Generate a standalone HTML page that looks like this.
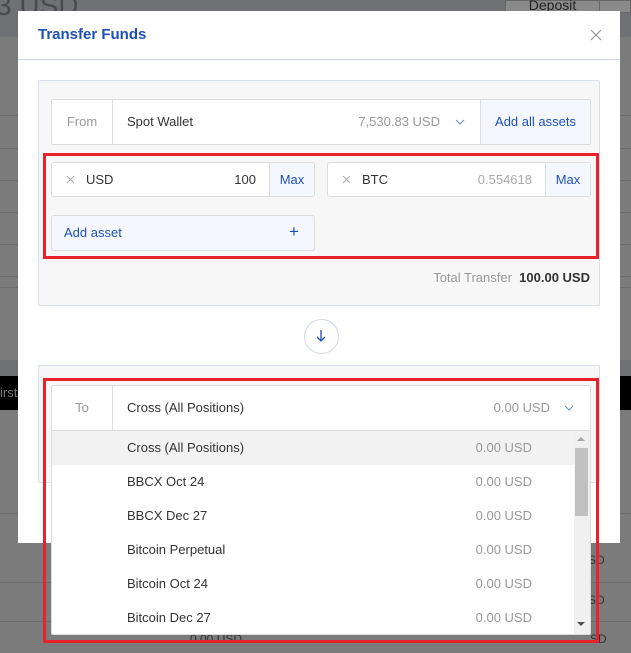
<!DOCTYPE html>
<html><head><meta charset="utf-8"><style>
*{box-sizing:border-box;margin:0;padding:0}
body{width:631px;height:653px;overflow:hidden;position:relative;background:#7b7b7b;font-family:"Liberation Sans",sans-serif;font-size:13px;color:#333}
.abs{position:absolute}
.bgl{position:absolute;left:0;width:631px;height:1px;background:#6c6c6c}
.modal{position:absolute;left:18px;top:11px;width:602px;height:532px;background:#fff}
.hdr{position:absolute;left:0;top:0;width:602px;height:49px;border-bottom:1px solid #d3dbe6}
.panel{position:absolute;background:#f7f7f7;border:1px solid #d6dfeb;border-radius:2px}
.box{position:absolute;background:#fff;border:1px solid #dcdcdc;border-radius:3px}
.red{position:absolute;border:3px solid #e8212a}
.blue{color:#1e4fb5}
.row{position:absolute;left:0;width:522px;height:34px;line-height:34px}
.row .n{position:absolute;left:75px}
.row .v{position:absolute;right:42px;color:#999}
</style></head><body>
<div class="abs" style="left:0;top:0;width:631px;height:37px;background:#6f7174"></div>
<div class="abs" style="left:-4px;top:-10px;font-size:28px;color:#4a4a4a">3 USD</div>
<div class="abs" style="left:505px;top:0;width:95px;height:13px;background:#8a8a8a;border:1px solid #666;color:#222;font-size:14px;text-align:center;line-height:8px">Deposit</div>
<div class="abs" style="left:599px;top:0;width:32px;height:13px;background:#8a8a8a;border:1px solid #666"></div>
<div class="bgl" style="top:115px"></div><div class="bgl" style="top:148px"></div><div class="bgl" style="top:180px"></div><div class="bgl" style="top:212px"></div><div class="bgl" style="top:244px"></div><div class="bgl" style="top:276px"></div><div class="bgl" style="top:287px"></div>
<div class="abs" style="left:0;top:360px;width:631px;height:16px;background:#6f7174"></div>
<div class="abs" style="left:0;top:376px;width:631px;height:34px;background:#000;color:#777;line-height:34px;font-size:13px;padding-left:0">irst</div>
<div class="bgl" style="top:513px"></div><div class="bgl" style="top:582px"></div><div class="bgl" style="top:621px"></div>
<div class="abs" style="left:588px;top:553px;color:#333;font-size:12px">SD</div>
<div class="abs" style="left:588px;top:593px;color:#333;font-size:12px">SD</div>
<div class="abs" style="left:190px;top:632px;color:#333;font-size:12px">0.00 USD</div>
<div class="abs" style="left:590px;top:632px;color:#333;font-size:12px">SD</div>

<div class="modal">
 <div class="hdr">
  <div class="abs blue" style="left:20px;top:15px;font-size:15px;font-weight:bold">Transfer Funds</div>
  <svg class="abs" style="left:572px;top:18px" width="12" height="12"><path d="M1 1L11 11M11 1L1 11" stroke="#999" stroke-width="1.2"/></svg>
 </div>
 <div class="panel" style="left:20px;top:69px;width:562px;height:226px"></div>
 <div class="panel" style="left:20px;top:354px;width:562px;height:118px"></div>
</div>

<div class="box" style="left:51px;top:99px;width:540px;height:46px;border-radius:2px">
 <div class="abs" style="left:0;top:0;width:61px;height:44px;border-right:1px solid #dcdcdc;line-height:44px;text-align:center;color:#999">From</div>
 <div class="abs" style="left:75px;top:0;line-height:44px">Spot Wallet</div>
 <div class="abs" style="right:150px;top:0;line-height:44px;color:#999">7,530.83 USD</div>
 <svg class="abs" style="left:403px;top:19px" width="10" height="6"><path d="M1 1L5 5L9 1" stroke="#6a86c8" fill="none"/></svg>
 <div class="abs blue" style="left:428px;top:0;width:110px;height:44px;border-left:1px solid #dcdcdc;background:#f4f8fe;line-height:44px;text-align:center">Add all assets</div>
</div>

<div class="box" style="left:51px;top:162px;width:264px;height:35px">
 <svg class="abs" style="left:14px;top:12px" width="9" height="9"><path d="M1 1L8 8M8 1L1 8" stroke="#aaa"/></svg>
 <div class="abs" style="left:34px;top:0;line-height:33px">USD</div>
 <div class="abs" style="right:58px;top:0;line-height:33px">100</div>
 <div class="abs blue" style="left:217px;top:0;width:45px;height:33px;border-left:1px solid #dcdcdc;background:#f4f8fe;line-height:33px;text-align:center">Max</div>
</div>
<div class="box" style="left:327px;top:162px;width:264px;height:35px">
 <svg class="abs" style="left:14px;top:12px" width="9" height="9"><path d="M1 1L8 8M8 1L1 8" stroke="#aaa"/></svg>
 <div class="abs" style="left:34px;top:0;line-height:33px">BTC</div>
 <div class="abs" style="right:58px;top:0;line-height:33px;color:#aaa">0.554618</div>
 <div class="abs blue" style="left:217px;top:0;width:45px;height:33px;border-left:1px solid #dcdcdc;background:#f4f8fe;line-height:33px;text-align:center">Max</div>
</div>
<div class="box blue" style="left:51px;top:215px;width:264px;height:36px;background:#f4f8fe;line-height:34px;padding-left:12px">Add asset<span class="abs" style="left:237px;top:-1px;font-size:17px;font-weight:300">+</span></div>
<div class="red" style="left:43px;top:153px;width:556px;height:106px"></div>
<div class="abs" style="right:41px;top:270px;color:#999;white-space:nowrap">Total Transfer&nbsp;&nbsp;<b style="color:#333">100.00 USD</b></div>
<div class="abs" style="left:304px;top:319px;width:35px;height:35px;border:1px solid #cfd8e6;border-radius:50%;background:#fff"></div>
<svg class="abs" style="left:316px;top:329px" width="10" height="14"><path d="M5 1V12M1 8L5 12L9 8" stroke="#1e4fb5" stroke-width="1.3" fill="none"/></svg>

<div class="box" style="left:51px;top:385px;width:540px;height:250px;border-radius:2px;overflow:hidden">
 <div class="abs" style="left:0;top:0;width:538px;height:45px;border-bottom:1px solid #dcdcdc">
  <div class="abs" style="left:0;top:0;width:61px;height:44px;border-right:1px solid #dcdcdc;line-height:44px;text-align:center;color:#999">To</div>
  <div class="abs" style="left:75px;top:0;line-height:44px">Cross (All Positions)</div>
  <div class="abs" style="right:40px;top:0;line-height:44px;color:#999">0.00 USD</div>
  <svg class="abs" style="left:512px;top:19px" width="10" height="6"><path d="M1 1L5 5L9 1" stroke="#6a86c8" fill="none"/></svg>
 </div>
 <div class="row" style="top:45px;background:#f2f2f2"><span class="n">Cross (All Positions)</span><span class="v">0.00 USD</span></div>
 <div class="row" style="top:79px"><span class="n">BBCX Oct 24</span><span class="v">0.00 USD</span></div>
 <div class="row" style="top:113px"><span class="n">BBCX Dec 27</span><span class="v">0.00 USD</span></div>
 <div class="row" style="top:147px"><span class="n">Bitcoin Perpetual</span><span class="v">0.00 USD</span></div>
 <div class="row" style="top:181px"><span class="n">Bitcoin Oct 24</span><span class="v">0.00 USD</span></div>
 <div class="row" style="top:215px"><span class="n">Bitcoin Dec 27</span><span class="v">0.00 USD</span></div>
 <div class="abs" style="left:522px;top:45px;width:16px;height:205px;background:#f0f0f0"></div>
 <div class="abs" style="left:523px;top:62px;width:13px;height:68px;background:#c1c1c1"></div>
 <svg class="abs" style="left:524px;top:50px" width="10" height="6"><path d="M1 5L5 1L9 5Z" fill="#a3a3a3"/></svg>
 <svg class="abs" style="left:524px;top:235px" width="10" height="6"><path d="M1 1L5 5L9 1Z" fill="#505050"/></svg>
</div>
<div class="red" style="left:43px;top:378px;width:556px;height:265px"></div>
</body></html>
